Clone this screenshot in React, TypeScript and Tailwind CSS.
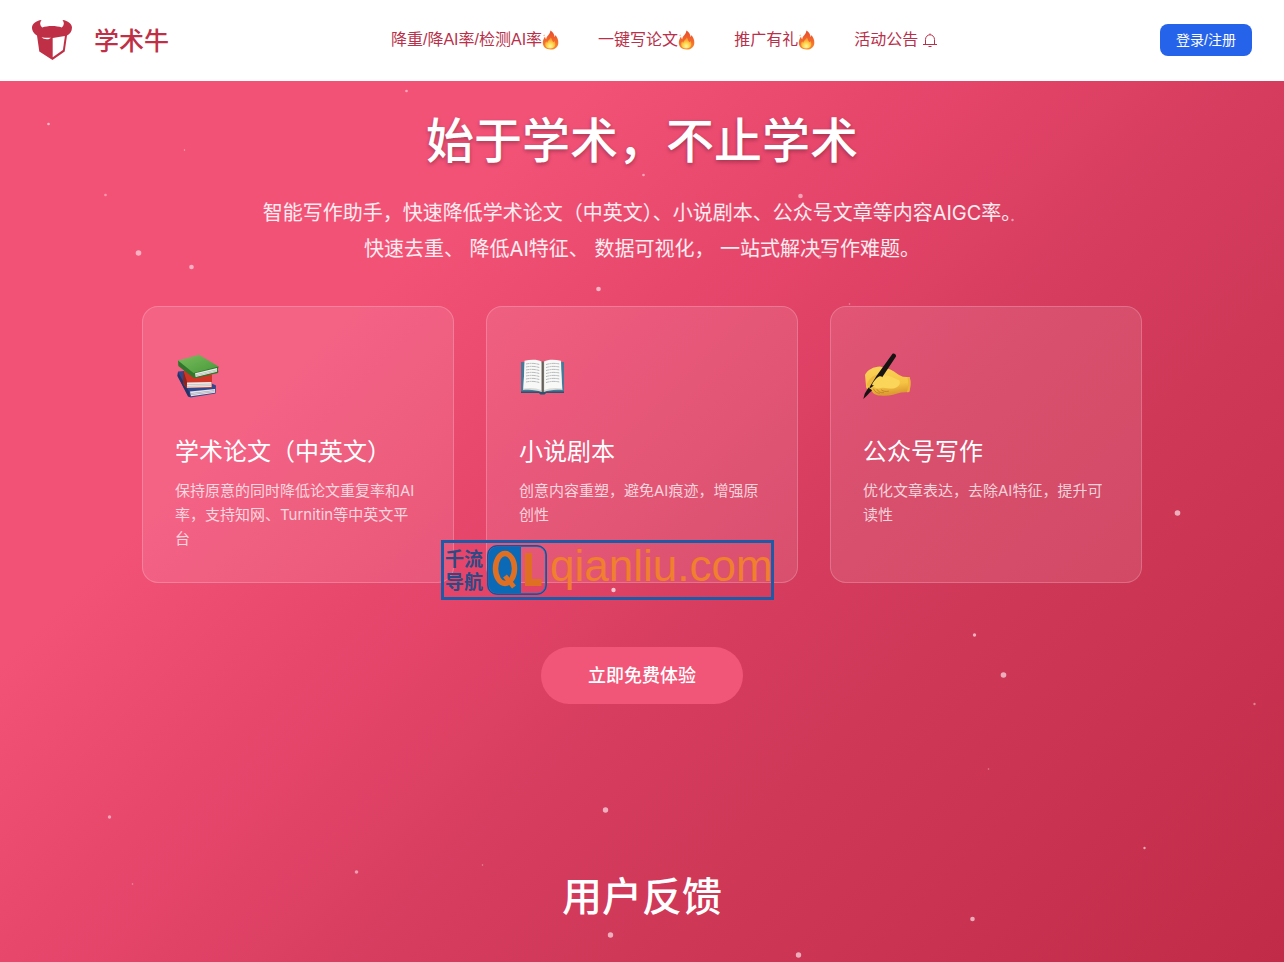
import { ReactNode } from 'react';

const PARTICLES = [
  { x: 48, y: 124, r: 1.3, o: 0.6 },
  { x: 406, y: 91, r: 1.3, o: 0.5 },
  { x: 184, y: 150, r: 0.7, o: 0.5 },
  { x: 105, y: 195, r: 1.3, o: 0.4 },
  { x: 138, y: 253, r: 2.8, o: 0.55 },
  { x: 191, y: 267, r: 2.3, o: 0.55 },
  { x: 643, y: 175, r: 1.3, o: 0.5 },
  { x: 800, y: 196, r: 2.3, o: 0.5 },
  { x: 1012, y: 220, r: 1.2, o: 0.5 },
  { x: 819, y: 257, r: 2, o: 0.4 },
  { x: 598, y: 289, r: 2.3, o: 0.6 },
  { x: 849, y: 304, r: 0.8, o: 0.4 },
  { x: 1177, y: 513, r: 2.8, o: 0.6 },
  { x: 613, y: 590, r: 2.2, o: 0.7 },
  { x: 974, y: 635, r: 1.7, o: 0.6 },
  { x: 1003, y: 675, r: 2.8, o: 0.6 },
  { x: 1254, y: 704, r: 1.2, o: 0.4 },
  { x: 988, y: 769, r: 0.8, o: 0.4 },
  { x: 605, y: 810, r: 2.7, o: 0.6 },
  { x: 109, y: 817, r: 1.7, o: 0.5 },
  { x: 1144, y: 848, r: 1.2, o: 0.6 },
  { x: 482, y: 865, r: 0.8, o: 0.4 },
  { x: 356, y: 872, r: 1.8, o: 0.5 },
  { x: 132, y: 884, r: 0.8, o: 0.4 },
  { x: 972, y: 919, r: 2.3, o: 0.6 },
  { x: 610, y: 935, r: 2.7, o: 0.6 },
  { x: 798, y: 955, r: 2.7, o: 0.6 },
];

function Particles() {
  return (
    <svg className="pointer-events-none absolute inset-0 h-full w-full" aria-hidden="true">
      {PARTICLES.map((p) => (
        <circle key={`${p.x}-${p.y}`} cx={p.x + 0.5} cy={p.y} r={p.r} fill="#fff" fillOpacity={p.o} />
      ))}
    </svg>
  );
}

function BullLogo() {
  return (
    <svg className="size-10" viewBox="0 0 40 40" aria-hidden="true">
      <path
        fill="#bf3046"
        d="M9.500 0C4 .6 0 4 0 7.600c0 4 2.800 6.800 5 7.900L7.300 31.500 20.500 40 32.700 31.500 35 15.500c2.800-1.300 5-4 5-7.900C40 4 36 .6 30.500 0c2 2.400 1.800 5.400-.7 7.400C27 6.600 23.500 6 20 6s-7 .6-9.800 1.400C7.700 5.400 7.500 2.400 9.500 0Z"
      />
      <path fill="#fff" d="M20.700 17.900 32.900 16 30.900 30 20.700 37.200Z" />
      <path fill="#fff" d="M9.500 17.200c2 .3 5.200.7 9.500.6-1 1-2.400 1.700-4.200 1.500-2.300-.3-4-.9-5.300-2.100Z" />
    </svg>
  );
}

function FireIcon() {
  return (
    <svg className="-ml-0.5 h-5 w-5" viewBox="0 0 20 20" aria-hidden="true">
      <defs>
        <linearGradient id="flame" x1="0" y1="0" x2="0" y2="1">
          <stop offset="0" stopColor="#ea4a2c" />
          <stop offset=".55" stopColor="#f26a2c" />
          <stop offset="1" stopColor="#f78d2f" />
        </linearGradient>
        <radialGradient id="flame-core" cx=".5" cy=".8" r=".6">
          <stop offset="0" stopColor="#fff6a8" />
          <stop offset=".5" stopColor="#ffd84e" />
          <stop offset="1" stopColor="#fba034" />
        </radialGradient>
      </defs>
      <path
        fill="url(#flame)"
        d="M10.400.4c2.600 1.300 3.900 3.600 4.200 6.500.6-.5.800-1.200.7-2 2 2.200 3.200 4.800 3 8-.2 4-3 6.600-7.600 6.600-4.700 0-7.900-2.500-7.900-6.700 0-2.500 1-4.400 2.200-6.300.1 1.300.5 2.200 1.200 2.700C6.500 5.800 10 4.500 10.400.4Z"
      />
      <path
        fill="url(#flame-core)"
        d="M10.800 7.500c1.300 1.600 1.200 3.300 2.700 4.800.5-.4.700-1 .7-1.600 1.300 1.800 1.600 3.800.8 5.400-.8 1.600-2.400 2.300-4.700 2.300-3 0-5.200-1.500-5.200-4 0-1.200.4-2.300 1.100-3.200.2.800.6 1.300 1.200 1.600 0-2.600 3.200-3.400 3.400-5.300Z"
      />
      <path fill="#f38b45" d="M4.200 4.500c.7.900.4 1.600-.2 1.800-.7-.4-.4-1.100.2-1.800Z" />
    </svg>
  );
}

function BellIcon() {
  return (
    <svg className="ml-1 h-4 w-4" viewBox="0 0 16 16" fill="none" stroke="currentColor" strokeWidth="1" aria-hidden="true">
      <path d="M3.500 12.500V7.500a4.500 4.700 0 0 1 9 0v5M1 12.500h14M8 2.800V1.500M6.500 14.500h3" />
    </svg>
  );
}

function BooksIcon() {
  return (
    <svg className="h-12 w-12" viewBox="0 0 48 48" aria-hidden="true">
      <defs>
        <linearGradient id="book-green" x1="0" y1="0" x2="1" y2="1">
          <stop offset="0" stopColor="#7cbb5e" />
          <stop offset="1" stopColor="#469a38" />
        </linearGradient>
      </defs>
      <path fill="#34478c" d="M3 18.500 9 18l32 14.500-.5 8L15.500 44.500 13 42.500 2.500 23Z" />
      <path fill="#253468" d="M3 19 2.500 23 13 43.500l2 .8-.7-5.300Z" />
      <path fill="#e6e5ea" d="M15 38.500 40 36v3.800l-24 3.400Z" />
      <path fill="#9da0ae" d="M15.300 40.200 39.500 37.300v.5L15.500 40.700ZM15.500 41.500l24-3v.5L15.700 42Z" />
      <path fill="#cf3526" d="M9 17 37 21.500v13.200L11.500 35 8.500 31Z" />
      <path fill="#8c231e" d="M8.500 18 8 29.500l3.500 5.500.5-6.200Z" />
      <path fill="#ece9e8" d="M12 29.500 36.500 29v5L12 34.700Z" />
      <path fill="#aaa" d="M12 31.200 36 30.700v.6L12 31.800ZM12 33l24-.5v.6L12 33.600Z" />
      <path fill="#32762c" d="M3 7.500 3.300 13 18 24.500l2.500.7L43 20l.4-1.500-.6-1.700.8-3.300Z" />
      <path fill="url(#book-green)" d="M3 7.500 24 1.800 43.700 13.500 18.500 20Z" />
      <path fill="#e9ece8" d="M20 20.200 42 15v3.800L20.700 24Z" />
      <path fill="#a9b0a8" d="M20.200 21.500 42 16.400v.5L20.300 22ZM20.400 22.800 42 17.700v.5L20.500 23.300Z" />
    </svg>
  );
}

function OpenBookIcon() {
  const lines = [7.5, 10.5, 13.5, 16.5, 19.5, 22.5, 25.5];
  return (
    <svg className="h-12 w-12" viewBox="0 0 48 48" aria-hidden="true">
      <g transform="translate(0 6)">
        <path fill="#477a99" d="M2 3h43v31H27l-1.500 1.200h-4L20 34H2Z" />
        <path fill="#2e526e" d="M2 32.500h43V34H27l-1.500 1.500h-4L20 34H2Z" />
        <path fill="#d9d9d5" d="M4 31 6 3.500h35.500L43.500 31c-7.500-.8-14 .2-18.500 2h-2.500C18 31.200 11.500 30.200 4 31Z" />
        <path fill="#f8f8f7" d="M5.500 1.800C12 .2 18.500.2 22.500 2.500v28.800C17.500 29 11 28.500 4.600 29.600Z" />
        <path fill="#f8f8f7" d="M42 1.800C35.500.2 29 .2 25 2.500v28.800c5-2.300 11.500-2.800 17.900-1.700Z" />
        <path fill="#857f78" d="M22.500 2.500h2.600V33h-2.600Z" />
        <path fill="#4f4b46" d="M23.400 2.500h.9V33h-.9Z" />
        <g fill="none" stroke="#a4a8ac" strokeWidth=".8" strokeDasharray="3 .5 2 .4 4 .5">
          {lines.map((y) => (
            <path key={y} d={`M7 ${y - 2.5}q7-1.500 13.500.6M27 ${y - 1.9}q6.500-2.100 13.500-.6`} />
          ))}
        </g>
      </g>
    </svg>
  );
}

function WritingIcon() {
  return (
    <svg className="h-12 w-12" viewBox="0 0 48 48" aria-hidden="true">
      <defs>
        <linearGradient id="hand" x1="0" y1="0" x2=".2" y2="1">
          <stop offset="0" stopColor="#fbd45a" />
          <stop offset=".7" stopColor="#f6c344" />
          <stop offset="1" stopColor="#dd9d30" />
        </linearGradient>
      </defs>
      <path
        fill="url(#hand)"
        d="M2 22C4 17 11 13.500 17 13.500l9 2.500c5 1.500 9.500 6.500 14 7.700l6.700.6c1.200 4 1 10.500-.5 14.700l-8 .4C32 41 25 43.500 18 42.500c-5 .5-8.500-2-9.500-5.200-3.500.2-5.800-1.800-5.500-4.300Z"
      />
      <path fill="#efb93f" d="M3.500 32.500C5 27 9 22 15.500 21.500L11 30l-2.500 4Z" />
      <path
        fill="#fad55a"
        d="M9 32c1-4 5-8.500 9.500-9.500 6-1.500 12 2 18 5 1.500 4-2 7.500-6.500 8-5 .5-8-1.500-12-.5-3.500 1-7 0-9-3Z"
      />
      <path fill="none" stroke="#c4862a" strokeWidth="1" strokeLinecap="round" d="M10.500 36c1.500 3 4 4.500 6 4.300M14 36.500c1.500 2.500 4 3.700 6.500 3.200M18.500 37c2 1.500 4.500 1.900 7 1.200" />
      <path fill="#ecb43c" d="M44.500 24.200h2.200c1.200 4 1 10.700-.5 14.900l-2.300.1c1.500-4.700 1.700-10 .6-15Z" />
      <path fill="#171313" d="M29.500.800c1.500-1 4 .6 3.500 2.700L20 23c-1.700 2.900-3.500 5.300-5.700 7L7.500 35l-1.200-.6 7.500-11.800Z" />
      <path fill="#fad558" d="M9 32c1-3.500 5-7.700 7.500-8.700 2-.5 3.500.5 3 2.200-1 3-4.500 5.500-7.500 7.500Z" />
      <path fill="#171313" d="m5.500 34.500 3.500 2.700-5.200 5.600L.3 46 1.700 40.800Z" />
    </svg>
  );
}

const NAV_ITEMS: { label: string; icon: ReactNode }[] = [
  { label: '降重/降AI率/检测AI率', icon: <FireIcon /> },
  { label: '一键写论文', icon: <FireIcon /> },
  { label: '推广有礼', icon: <FireIcon /> },
  { label: '活动公告', icon: <BellIcon /> },
];

const FEATURES: { title: string; text: string; icon: ReactNode }[] = [
  {
    title: '学术论文（中英文）',
    text: '保持原意的同时降低论文重复率和AI率，支持知网、Turnitin等中英文平台',
    icon: <BooksIcon />,
  },
  {
    title: '小说剧本',
    text: '创意内容重塑，避免AI痕迹，增强原创性',
    icon: <OpenBookIcon />,
  },
  {
    title: '公众号写作',
    text: '优化文章表达，去除AI特征，提升可读性',
    icon: <WritingIcon />,
  },
];

function Header() {
  return (
    <header className="flex h-[81px] items-center justify-between bg-white px-8 pb-px font-['Liberation_Sans','Noto_Sans_CJK_SC',sans-serif]">
      <a href="#" className="flex items-center gap-[22px] text-[#bf3046]">
        <BullLogo />
        <span className="pt-0.5 text-[25px] font-medium leading-10">学术牛</span>
      </a>
      <nav className="flex items-center gap-[38px]">
        {NAV_ITEMS.map((item) => (
          <a key={item.label} href="#" className="flex items-center text-base text-[#b8304a]">
            {item.label}
            {item.icon}
          </a>
        ))}
      </nav>
      <button type="button" className="h-8 rounded-lg bg-[#2563eb] px-4 text-sm text-white">
        登录/注册
      </button>
    </header>
  );
}

function Watermark() {
  return (
    <div className="absolute left-1/2 top-[459px] flex h-[60px] w-[333px] -translate-x-[201px] items-center border-[3px] border-[#1f5aa6] pl-px">
      <div className="w-[42px] shrink-0 pt-0.5 text-[19px] font-bold leading-[23px] text-[#2d4a86]">
        千流
        <br />
        导航
      </div>
      <svg className="h-[50px] w-[60px] shrink-0" viewBox="0 0 60 50" aria-hidden="true">
        <path fill="#0b69b5" d="M10 1h24v48H10a9 9 0 0 1-9-9V10a9 9 0 0 1 9-9Z" />
        <rect x="1" y="1" width="58" height="48" rx="9" fill="none" stroke="#2b72bd" strokeWidth="2" />
        <rect x=".8" y=".8" width="58.400" height="48.400" rx="9" fill="none" stroke="#1c4484" strokeWidth="1" />
        <g fill="none" stroke="#df6f22">
          <ellipse cx="18" cy="23.500" rx="9.500" ry="15" strokeWidth="5.500" />
          <path strokeWidth="5" d="m18 31 9 11" />
          <path strokeWidth="7" d="M41.500 8v29.500h13" />
        </g>
      </svg>
      <span className="pb-2 pl-[3px] font-['Liberation_Sans',sans-serif] text-[44px] leading-none text-[#f07f2e]">
        qianliu.com
      </span>
    </div>
  );
}

export default function App() {
  return (
    <div className="relative min-h-screen bg-white font-[Inter,'Noto_Sans_CJK_SC',sans-serif]">
      <Header />
      <main className="min-h-[calc(100vh-81px)] bg-[linear-gradient(135deg,#f35277_0%,#f35277_27%,#e8476c_41%,#d53c5e_59%,#ca3351_81%,#c12b48_100%)] px-8 pb-8 text-white">
        <Particles />
        <section className="relative flex flex-col items-center">
          <h1 className="pt-6 text-5xl font-medium leading-[72px] [text-shadow:0_2px_4px_rgba(0,0,0,0.3)]">
            始于学术，不止学术
          </h1>
          <p className="mt-[18px] text-center text-xl leading-9 text-white/90">
            智能写作助手，快速降低学术论文（中英文）、小说剧本、公众号文章等内容AIGC率。
            <br />
            快速去重、 降低AI特征、 数据可视化， 一站式解决写作难题。
          </p>
          <div className="mt-[39px] grid w-full max-w-[1000px] grid-cols-3 gap-8">
            {FEATURES.map((feature) => (
              <article
                key={feature.title}
                className="rounded-2xl border border-white/20 bg-white/10 px-8 pb-[31px] pt-8"
              >
                <div className="mb-[22px] flex h-[75px] items-center">{feature.icon}</div>
                <h2 className="mb-[11px] text-2xl leading-8">{feature.title}</h2>
                <p className="text-[15px] leading-6 text-white/75">{feature.text}</p>
              </article>
            ))}
          </div>
          <button
            type="button"
            className="mt-16 h-[57px] rounded-full bg-[#f15678] px-[47px] text-lg font-medium text-white"
          >
            立即免费体验
          </button>
          <Watermark />
        </section>
        <section className="relative mt-[163px] text-center">
          <h2 className="text-[40px] font-medium leading-[60px]">用户反馈</h2>
        </section>
      </main>
    </div>
  );
}
